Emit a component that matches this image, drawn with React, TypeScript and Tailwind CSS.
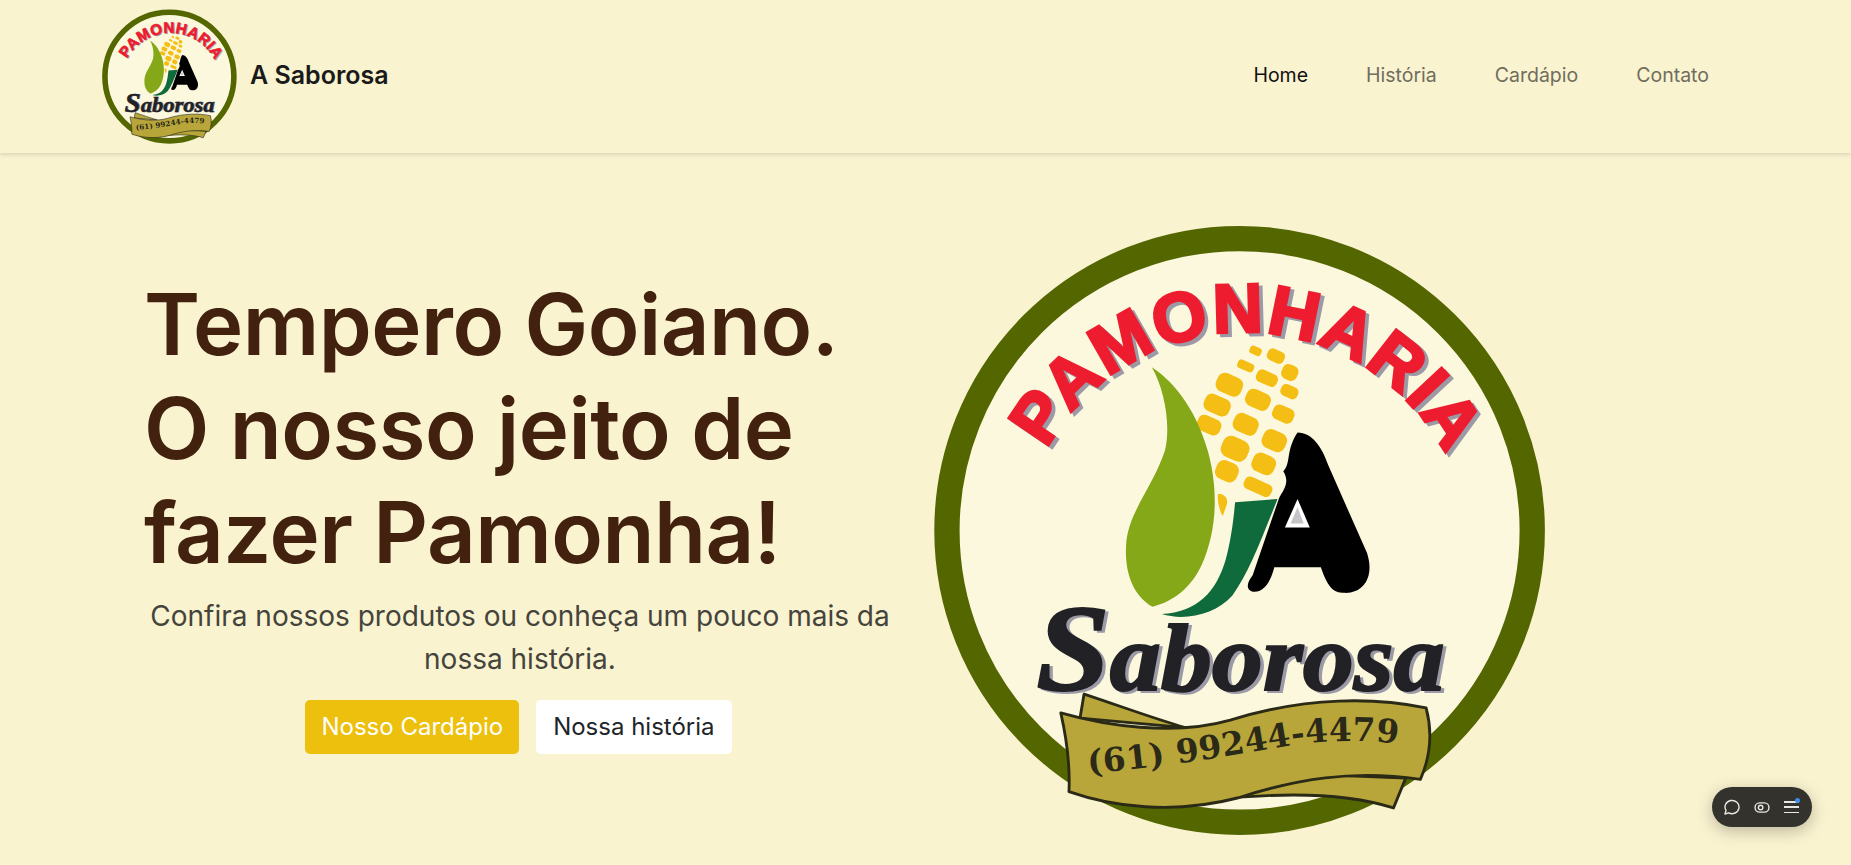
import { useId } from "react";

const kernels = [
  [822, 345, 30, 20], [872, 358, 44, 30], [906, 398, 40, 38], [798, 382, 42, 22],
  [850, 412, 54, 32], [758, 428, 66, 48], [905, 445, 44, 30], [728, 478, 66, 44],
  [828, 465, 62, 44], [890, 500, 54, 38], [708, 527, 60, 40], [798, 525, 62, 46],
  [868, 565, 60, 48], [772, 585, 68, 54], [752, 640, 56, 48], [842, 622, 58, 48],
  [828, 678, 72, 32],
];

function Logo({ className }: { className: string }) {
  const id = useId();
  const arc = `${id}-arc`;
  const ribbon = `${id}-ribbon`;
  return (
    <svg viewBox="0 0 1568 1568" className={className} role="img" aria-label="Pamonharia A Saborosa">
      <defs>
        <path id={arc} d="M 310 586 A 554 554 0 0 1 1280 586" />
        <path id={ribbon} d="M 412 1380 C 620 1363 780 1333 900 1313 C 1000 1298 1090 1298 1172 1308" />
      </defs>
      <ellipse cx="783" cy="785" rx="717" ry="715" fill="#fcf8de" stroke="#546600" strokeWidth="62" />

      {/* PAMONHARIA */}
      <g fontFamily="'Liberation Sans', sans-serif" fontWeight="700" fontSize="170">
        <text fill="#9b9aa6" stroke="#9b9aa6" strokeWidth="7" transform="translate(9 7)">
          <textPath href={`#${arc}`} textLength="1196" lengthAdjust="spacing">PAMONHARIA</textPath>
        </text>
        <text fill="#ed1c2e" stroke="#ed1c2e" strokeWidth="7">
          <textPath href={`#${arc}`} textLength="1196" lengthAdjust="spacing">PAMONHARIA</textPath>
        </text>
      </g>

      {/* milho */}
      {kernels.map(([x, y, w, h], i) => (
        <rect
          key={i}
          x={x - w / 2}
          y={y - h / 2}
          width={w}
          height={h}
          rx={Math.min(w, h) / 2.6}
          fill="#f5be14"
          transform={`rotate(24 ${x} ${y})`}
        />
      ))}
      <path d="M730 695 C 745 695 755 705 752 720 L 742 750 C 735 740 728 715 730 695 Z" fill="#f5be14" />

      <path
        d="M568 385 C 630 425 680 500 705 590 C 730 680 730 780 690 870 C 665 925 620 960 570 972 C 530 950 500 900 505 820 C 510 740 570 680 600 590 C 615 530 600 440 568 385 Z"
        fill="#84a817"
      />
      <path
        d="M772 716 L 876 708 C 835 810 805 890 765 945 C 725 990 650 1008 592 990 C 680 985 725 935 748 860 C 762 810 768 760 772 716 Z"
        fill="#0f6b3c"
      />
      <path
        d="M925 545 C 960 545 985 580 1000 625 L 1095 840 C 1115 900 1085 940 1040 938 C 1010 938 998 920 982 875 L 868 875 C 858 915 840 938 815 935 C 798 930 800 915 815 895 L 880 705 C 895 680 905 665 890 640 C 910 620 895 590 925 545 Z"
        fill="#000"
      />
      <path d="M925 708 L 955 778 L 894 778 Z" fill="#fff" />
      <path d="M925 728 L 940 768 L 908 768 Z" fill="#c5c5c9" />

      {/* Saborosa */}
      <g fontFamily="'Liberation Serif', serif" fontWeight="700" fontStyle="italic">
        <text x="293" y="1182" fill="#9b9aa6" stroke="#9b9aa6" strokeWidth="5" fontSize="232" textLength="1000" lengthAdjust="spacingAndGlyphs">
          <tspan fontSize="300">S</tspan>aborosa
        </text>
        <text x="285" y="1175" fill="#222226" stroke="#222226" strokeWidth="5" fontSize="232" textLength="1000" lengthAdjust="spacingAndGlyphs">
          <tspan fontSize="300">S</tspan>aborosa
        </text>
      </g>

      {/* faixa */}
      <g stroke="#2a2a16" strokeWidth="7" strokeLinejoin="round" fill="#b9a63b">
        <path d="M402 1186 C 490 1215 570 1245 650 1268 L 392 1245 Z" />
        <path d="M1190 1392 L 1160 1465 C 1050 1430 900 1425 720 1445 L 900 1380 Z" />
        <path d="M345 1232 C 450 1262 620 1290 760 1250 C 950 1190 1120 1195 1240 1220 C 1256 1280 1250 1340 1226 1395 C 1060 1370 920 1395 780 1440 C 620 1482 470 1462 365 1425 C 368 1360 358 1290 345 1232 Z" />
      </g>
      <text fill="#2b2a18" fontFamily="'DejaVu Serif', serif" fontWeight="700" fontSize="80">
        <textPath href={`#${ribbon}`} textLength="765" lengthAdjust="spacing">(61) 99244-4479</textPath>
      </text>
    </svg>
  );
}

function Navbar() {
  const links = ["História", "Cardápio", "Contato"];
  return (
    <header className="h-[153px] flex items-center pl-[99px] pr-[142px] bg-[#faf3d0] shadow-[0_2px_4px_rgba(0,0,0,0.12)] relative">
      <a href="#" className="flex items-center gap-[10px]">
        <Logo className="w-[141px] h-[141px] shrink-0" />
        <span className="pb-[2px] text-[25px] font-semibold text-[#1a1a1a]">A Saborosa</span>
      </a>
      <nav className="ml-auto pb-[2px] flex items-center gap-[58px] text-[19.5px]">
        <a href="#" className="text-[#111]">Home</a>
        {links.map((link) => (
          <a key={link} href="#" className="text-[#6f6d5d]">{link}</a>
        ))}
      </nav>
    </header>
  );
}

function Hero() {
  return (
    <section className="flex items-center pl-[144px] pt-[57px] pb-[15px]">
      <div className="w-[752px] shrink-0 pb-[34px]">
        <h1 className="text-[85px] leading-[104px] font-semibold tracking-[-0.5px] text-[#42210f] whitespace-nowrap">
          Tempero Goiano.<br />O nosso jeito de<br />fazer Pamonha!
        </h1>
        <p className="mt-[10px] text-center text-[28px] leading-[43px] text-[#45443c]">
          Confira nossos produtos ou conheça um pouco mais da nossa história.
        </p>
        <div className="mt-[19px] flex justify-center gap-[17px] pr-[3px]">
          <a href="#" className="h-[54px] px-[16px] flex items-center rounded-[5px] bg-[#ecc00c] text-white text-[24px]">Nosso Cardápio</a>
          <a href="#" className="h-[54px] px-[17px] flex items-center rounded-[5px] bg-white text-[#212529] text-[24px]">Nossa história</a>
        </div>
      </div>
      <Logo className="ml-[24px] w-[640px] h-[640px] shrink-0" />
    </section>
  );
}

function ToolbarWidget() {
  return (
    <div className="fixed right-[39px] bottom-[38px] w-[100px] h-[40px] rounded-full bg-[#33322c] flex items-center justify-center gap-[14px] pr-[3px] text-[#e8e8e3] shadow-[0_4px_16px_rgba(0,0,0,0.25)]">
      <svg width="18" height="18" viewBox="0 0 18 18" fill="none" stroke="currentColor" strokeWidth="1.4">
        <path d="M3 16 L4 12.4 A7 6.6 0 1 1 6.6 14.8 Z" strokeLinejoin="round" />
      </svg>
      <svg width="16" height="13" viewBox="0 0 17 14" fill="none" stroke="currentColor" strokeWidth="1.5">
        <rect x="1" y="2" width="15" height="10" rx="5" />
        <circle cx="7" cy="7" r="2.4" />
      </svg>
      <span className="relative w-[15px] h-[12px] flex flex-col justify-between">
        <span className="h-[1.5px] bg-current" />
        <span className="h-[1.5px] bg-current" />
        <span className="h-[1.5px] bg-current" />
        <span className="absolute -top-[3px] -right-[1px] w-[5px] h-[5px] rounded-full bg-[#3b8fe8]" />
      </span>
    </div>
  );
}

export default function App() {
  return (
    <div className="min-h-screen bg-[#faf3d0] font-['Inter',sans-serif] overflow-hidden">
      <Navbar />
      <Hero />
      <ToolbarWidget />
    </div>
  );
}
